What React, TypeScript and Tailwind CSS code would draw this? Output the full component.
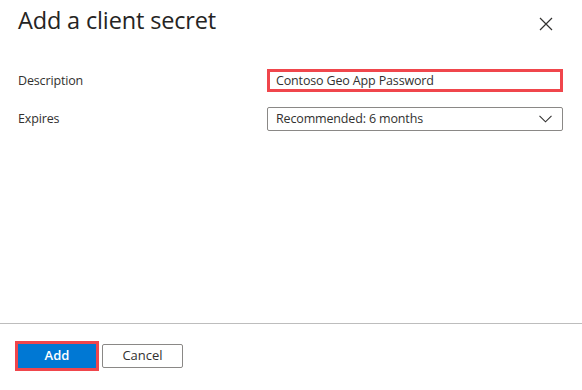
import React from "react";

export default function App() {
  return (
    <div className="w-[582px] h-[390px] bg-white flex flex-col text-[#323130] font-['Segoe_UI','Open_Sans',sans-serif]">
      <div className="h-[48px] flex items-start justify-between pl-[18px] pr-[29px] pt-[4px]">
        <h1 className="text-[23.5px] leading-[32px] font-medium text-[#252423] tracking-[-0.15px]">
          Add a client secret
        </h1>
        <button className="mt-[13px] w-[14px] h-[14px] flex items-center justify-center">
          <svg width="14" height="14" viewBox="0 0 14 14" fill="none">
            <path d="M1 1L13 13M13 1L1 13" stroke="#323130" strokeWidth="1.2" />
          </svg>
        </button>
      </div>
      <div className="pt-[21px] pl-[18px] pr-[19px] flex flex-col gap-[15px] text-[12.5px] tracking-[-0.15px]">
        <div className="flex items-center">
          <label className="w-[249px] pt-[1px]">Description</label>
          <div className="flex-1 h-[23px] border-[3px] border-[#f0464c] flex items-center pl-[6px] pt-[1px]">
            Contoso Geo App Password
          </div>
        </div>
        <div className="flex items-center">
          <label className="w-[249px] pt-[1px]">Expires</label>
          <div className="flex-1 h-[24px] border border-[#8a8886] rounded-[2px] flex items-center justify-between pl-[8px] pr-[10px]">
            <span className="pt-[1px]">Recommended: 6 months</span>
            <svg width="13" height="8" viewBox="0 0 13 8" fill="none">
              <path d="M0.5 0.8L6.5 6.8L12.5 0.8" stroke="#323130" strokeWidth="1.1" />
            </svg>
          </div>
        </div>
      </div>
      <div className="flex-1" />
      <div className="border-t border-[#bdbdbd] h-[67px] flex items-start pt-[20px] pl-[18px] gap-[6px]">
        <button className="w-[78px] h-[24px] bg-[#0078d4] text-white text-[13px] font-semibold outline-[3px] outline-solid outline-[#f0464c] flex items-center justify-center">
          Add
        </button>
        <button className="w-[81px] h-[24px] border border-[#8a8886] rounded-[2px] bg-white text-[13px] flex items-center justify-center">
          Cancel
        </button>
      </div>
    </div>
  );
}
